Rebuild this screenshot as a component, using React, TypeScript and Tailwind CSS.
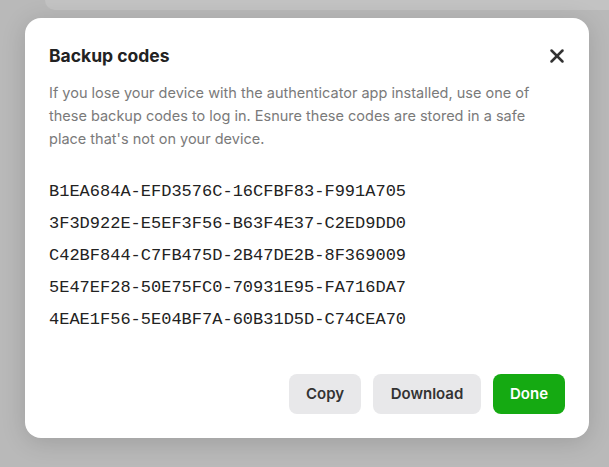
import { X } from 'lucide-react'

const codes = [
  'B1EA684A-EFD3576C-16CFBF83-F991A705',
  '3F3D922E-E5EF3F56-B63F4E37-C2ED9DD0',
  'C42BF844-C7FB475D-2B47DE2B-8F369009',
  '5E47EF28-50E75FC0-70931E95-FA716DA7',
  '4EAE1F56-5E04BF7A-60B31D5D-C74CEA70',
]

export default function App() {
  return (
    <div className="relative h-[467px] w-[609px] overflow-hidden bg-[#b9b9b9] font-['Inter',sans-serif]">
      {/* page behind the overlay */}
      <div className="absolute top-0 left-[45px] right-0 h-[10px] rounded-bl-xl bg-[#c3c3c3]" />

      <div className="relative pt-[18px] pl-[25px]">
        <div className="w-[564px] h-[420px] rounded-2xl bg-white px-6 pt-[26px] pb-6 shadow-[0_4px_24px_rgba(0,0,0,0.15)] flex flex-col">
          <div className="flex items-center justify-between">
            <h2 className="text-[17.5px] leading-6 font-bold text-[#222]">Backup codes</h2>
            <button className="text-[#333] -mr-[3px]">
              <X className="h-[22px] w-[22px]" strokeWidth={2.75} />
            </button>
          </div>

          <p className="mt-[13px] text-[14.5px] leading-[23px] text-[#7a7a7a]">
            If you lose your device with the authenticator app installed, use one of these backup codes to log in. Esnure these codes are stored in a safe place that's not on your device.
          </p>

          <div className="mt-[26px] font-['Liberation_Mono',monospace] text-[17px] leading-8 text-[#222]">
            {codes.map((c) => (
              <div key={c}>{c}</div>
            ))}
          </div>

          <div className="mt-auto flex justify-end gap-3">
            <button className="h-10 w-[72px] rounded-lg bg-[#e8e8ea] text-[15px] font-semibold text-[#333]">Copy</button>
            <button className="h-10 w-[108px] rounded-lg bg-[#e8e8ea] text-[15px] font-semibold text-[#333]">Download</button>
            <button className="h-10 w-[72px] rounded-lg bg-[#15aa12] text-[15px] font-semibold text-white">Done</button>
          </div>
        </div>
      </div>
    </div>
  )
}
